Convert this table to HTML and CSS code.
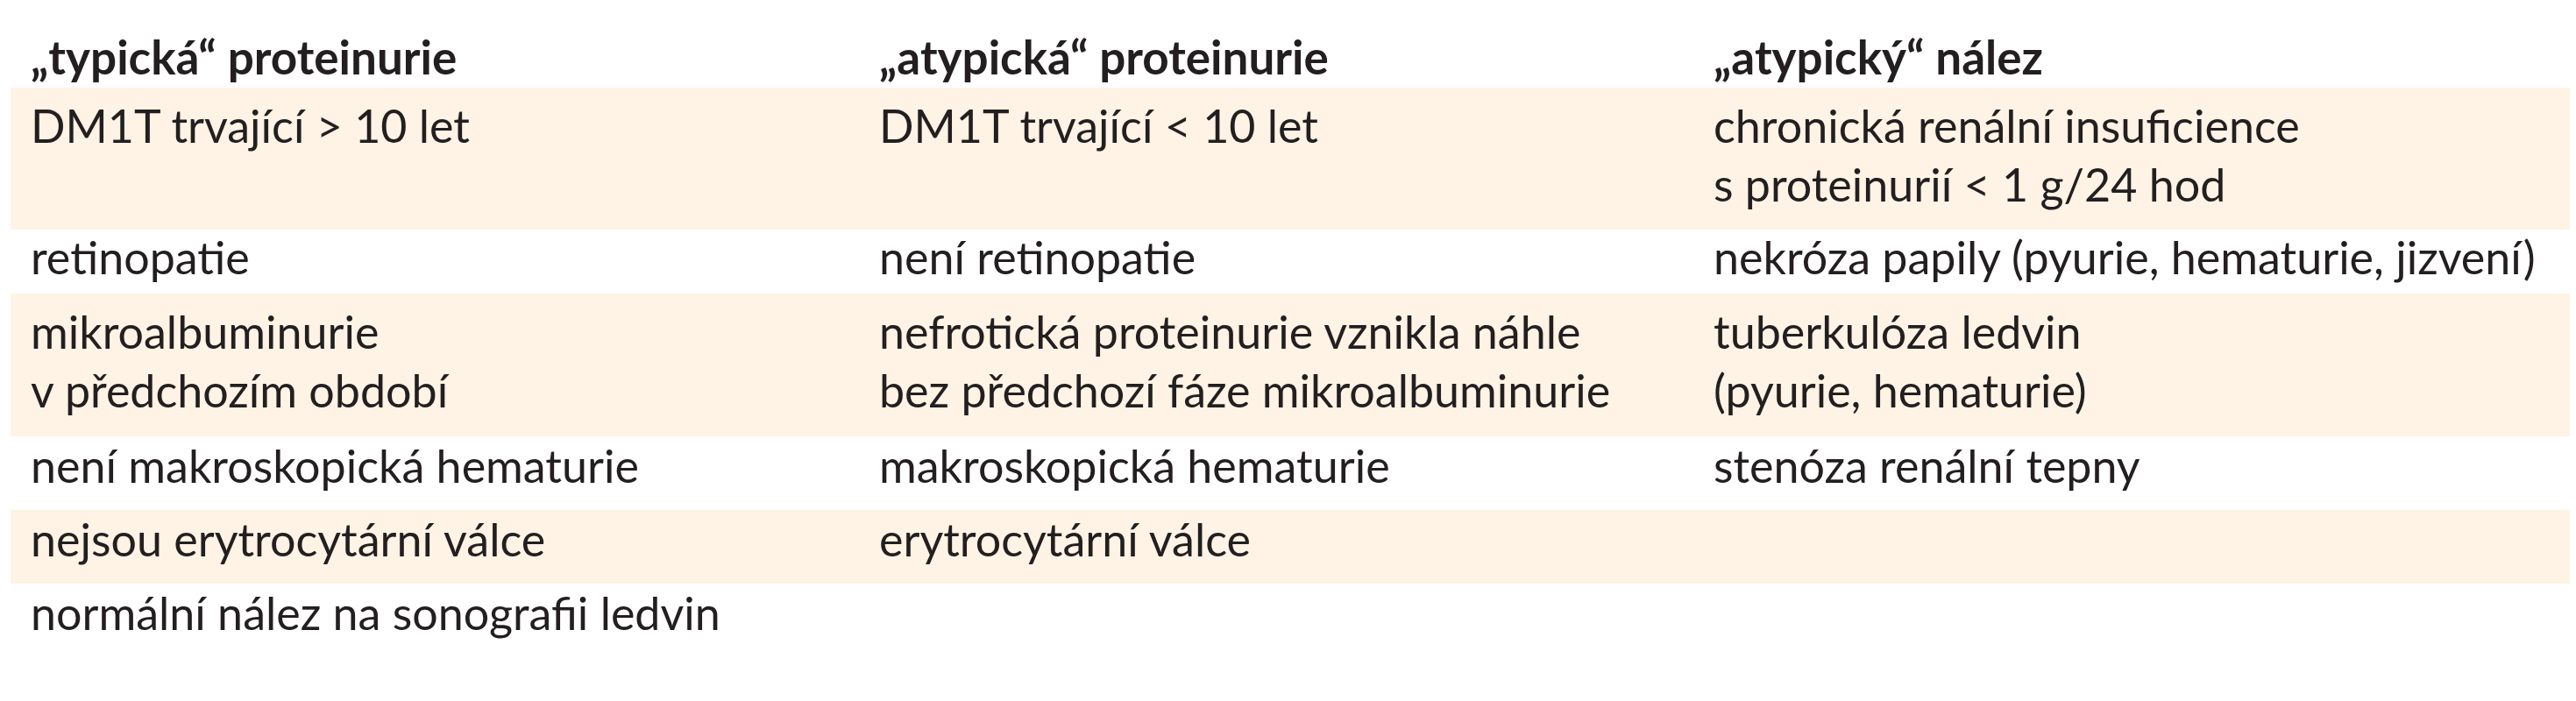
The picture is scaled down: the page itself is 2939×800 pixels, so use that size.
FILE: index.html
```html
<!DOCTYPE html>
<html lang="cs">
<head>
<meta charset="utf-8">
<title>Proteinurie</title>
<link rel="stylesheet" href="styles.css">
</head>
<body>
<div class="table">
  <div class="row head">
    <div class="cell">„typická“ proteinurie</div>
    <div class="cell">„atypická“ proteinurie</div>
    <div class="cell">„atypický“ nález</div>
  </div>
  <div class="row shade tall first">
    <div class="cell">DM1T trvající &gt; 10 let</div>
    <div class="cell">DM1T trvající &lt; 10 let</div>
    <div class="cell">chronická renální insuficience<br>s proteinurií &lt; 1 g/24 hod</div>
  </div>
  <div class="row short">
    <div class="cell">retinopatie</div>
    <div class="cell">není retinopatie</div>
    <div class="cell">nekróza papily (pyurie, hematurie, jizvení)</div>
  </div>
  <div class="row shade tall second">
    <div class="cell">mikroalbuminurie<br>v předchozím období</div>
    <div class="cell">nefrotická proteinurie vznikla náhle<br>bez předchozí fáze mikroalbuminurie</div>
    <div class="cell">tuberkulóza ledvin<br>(pyurie, hematurie)</div>
  </div>
  <div class="row">
    <div class="cell">není makroskopická hematurie</div>
    <div class="cell">makroskopická hematurie</div>
    <div class="cell">stenóza renální tepny</div>
  </div>
  <div class="row shade">
    <div class="cell">nejsou erytrocytární válce</div>
    <div class="cell">erytrocytární válce</div>
    <div class="cell"></div>
  </div>
  <div class="row">
    <div class="cell">normální nález na sonografii ledvin</div>
    <div class="cell"></div>
    <div class="cell"></div>
  </div>
</div>
</body>
</html>
```
FILE: styles.css
```css
html, body {
  margin: 0;
  padding: 0;
  background: #ffffff;
}

body {
  font-family: "Lato", "Open Sans", sans-serif;
  color: #231f20;
}

.table {
  display: flex;
  flex-direction: column;
  width: 2920px;
  margin-left: 12px;
}

.row {
  display: grid;
  grid-template-columns: 968px 952px 1000px;
  height: 84px;
  box-sizing: border-box;
}

.row.shade {
  background: #fef3e5;
}

.cell {
  padding-left: 23px;
  font-size: 52px;
  line-height: 67px;
  white-space: nowrap;
}

.row.head {
  height: 100px;
  padding-top: 31px;
}

.row.head .cell {
  font-weight: 700;
  font-size: 53px;
}

.row.tall {
  height: 162px;
  padding-top: 10px;
}

.row.tall.second {
  height: 163px;
}

.row.short {
  height: 73px;
}

.row.short .cell {
  line-height: 62px;
}
```
